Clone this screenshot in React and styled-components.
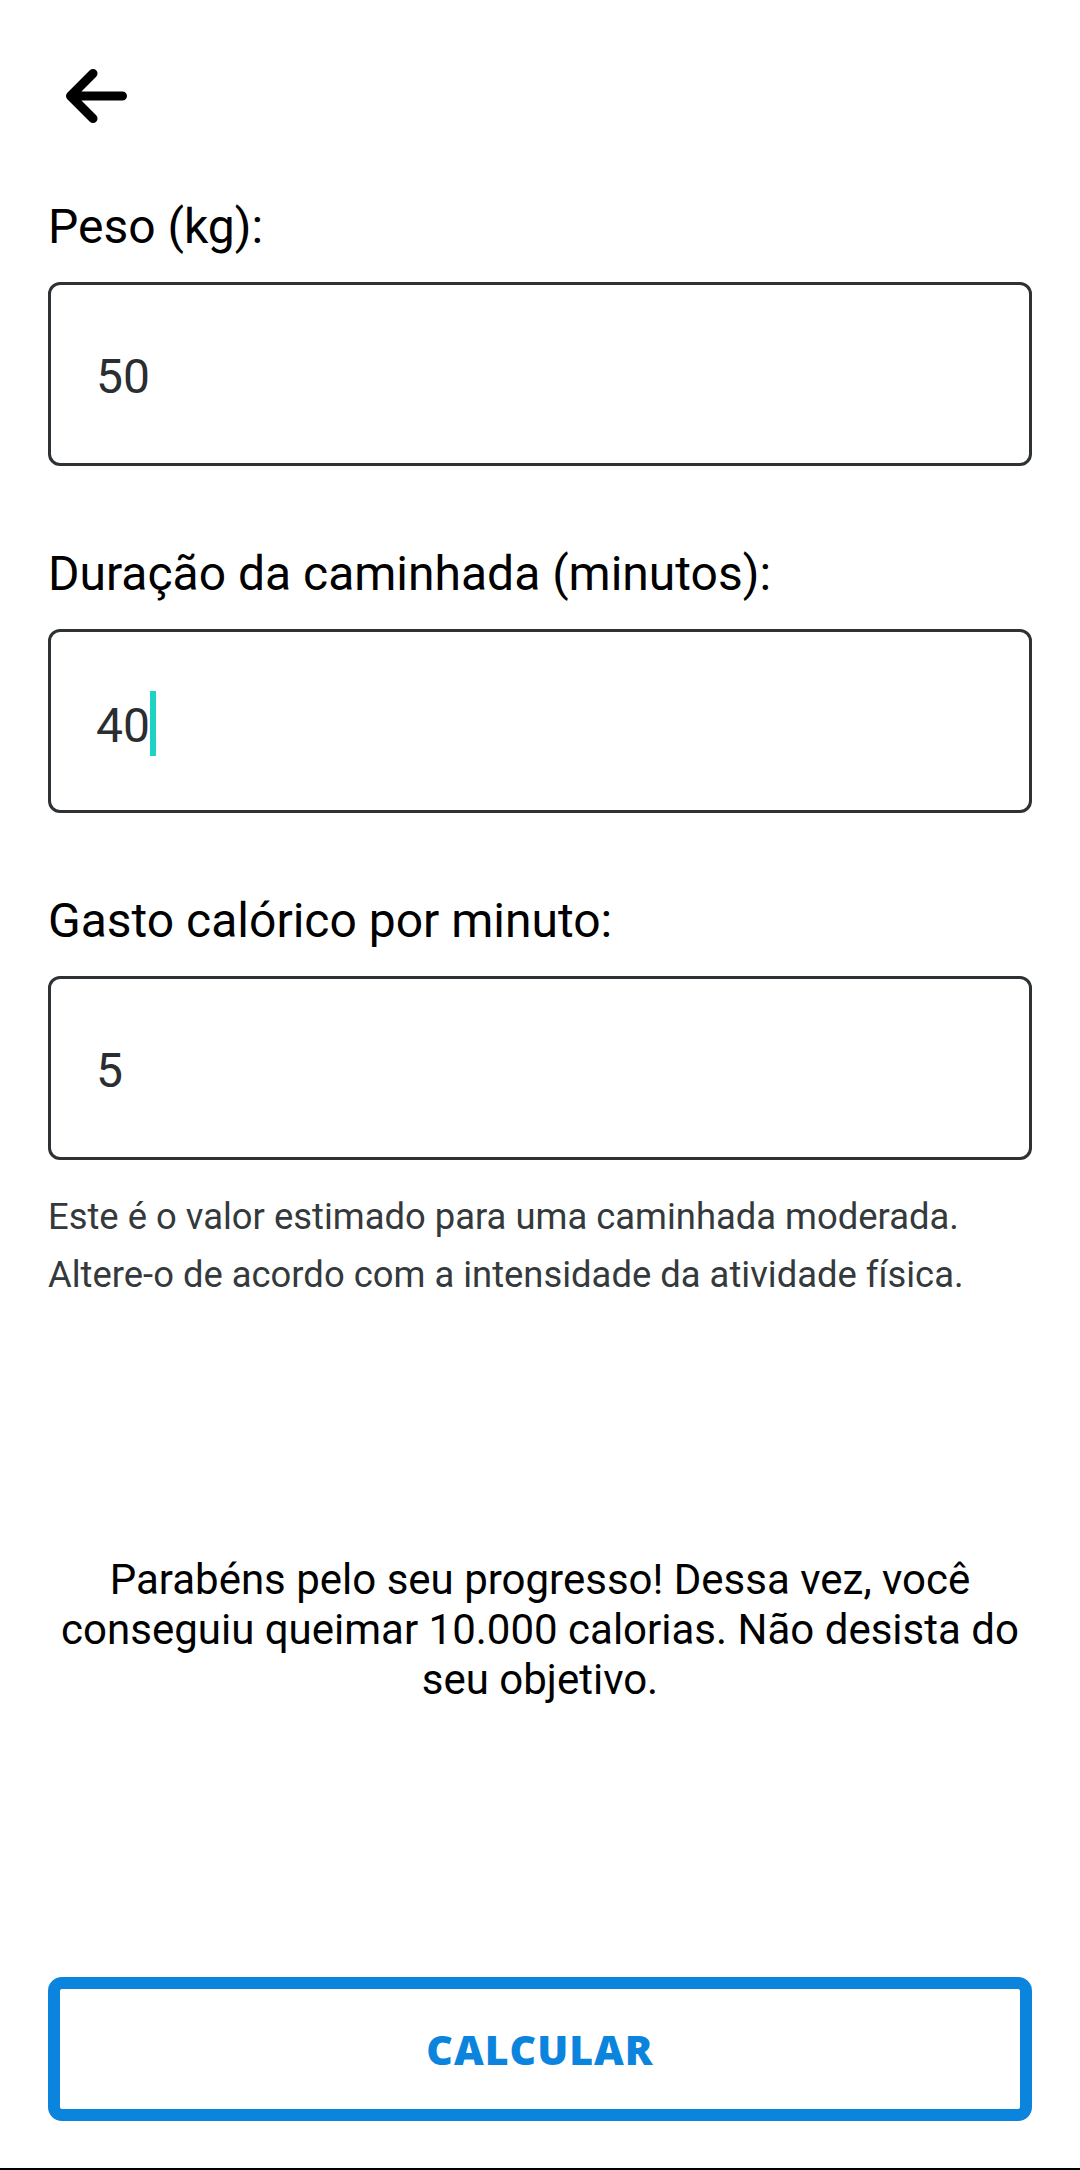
import React from "react";
import styled, { createGlobalStyle } from "styled-components";

const GlobalStyle = createGlobalStyle`
  html, body {
    margin: 0;
    padding: 0;
    background: #ffffff;
  }
  body {
    font-family: Roboto, "Noto Sans", "Liberation Sans", sans-serif;
    -webkit-font-smoothing: antialiased;
  }
  * { box-sizing: border-box; }
`;

const Page = styled.div`
  width: 1080px;
  min-height: 2170px;
  display: flex;
  flex-direction: column;
  background: #ffffff;
`;

const Content = styled.main`
  display: flex;
  flex-direction: column;
  padding: 0 48px;
`;

const Header = styled.header`
  display: flex;
  align-items: center;
  padding-top: 60px;
  height: 132px;
`;

const BackButton = styled.button`
  width: 72px;
  height: 72px;
  margin-left: 12px;
  padding: 0;
  border: none;
  background: transparent;
  display: flex;
  cursor: pointer;
`;

const Form = styled.section`
  display: flex;
  flex-direction: column;
  gap: 80px;
  margin-top: 67px;
`;

const Field = styled.div`
  display: flex;
  flex-direction: column;
`;

const Label = styled.label`
  font-size: 48px;
  line-height: 56px;
  color: #000000;
  margin-bottom: 27px;
`;

const InputBox = styled.div`
  height: 184px;
  border: 3px solid #2e3234;
  border-radius: 12px;
  display: flex;
  align-items: center;
  padding: 5px 0 0 45px;
  font-size: 48px;
  line-height: 56px;
  color: #2a2e31;
`;

const Caret = styled.span`
  display: inline-block;
  width: 6px;
  height: 65px;
  margin-left: 0;
  background: #1fd3c4;
  vertical-align: -14px;
`;

const Help = styled.p`
  margin: 28px 0 0;
  font-size: 36.4px;
  line-height: 58px;
  color: #34393c;
`;

const Message = styled.p`
  margin: 251px 0 0;
  padding: 0 10px;
  text-align: center;
  font-size: 42px;
  line-height: 50px;
  color: #000000;
`;

const CalcButton = styled.button`
  margin-top: 272px;
  height: 144px;
  width: 100%;
  border: 12px solid #0b84de;
  border-radius: 14px;
  background: #ffffff;
  color: #0b84de;
  font-family: "Open Sans", "Noto Sans", sans-serif;
  font-weight: 800;
  font-size: 41px;
  letter-spacing: 1px;
  display: flex;
  align-items: center;
  justify-content: center;
  cursor: pointer;
`;

const Footer = styled.div`
  margin-top: auto;
  height: 2px;
  background: #000000;
`;

function BackArrow() {
  return (
    <svg width="72" height="72" viewBox="0 0 72 72" aria-hidden="true">
      <path
        d="M62.5 36H11M33 13.5L10.5 36L33 58.5"
        fill="none"
        stroke="#000"
        strokeWidth="9"
        strokeLinecap="round"
        strokeLinejoin="round"
      />
    </svg>
  );
}

export default function App() {
  return (
    <>
      <GlobalStyle />
      <Page>
        <Content>
          <Header>
            <BackButton aria-label="Voltar">
              <BackArrow />
            </BackButton>
          </Header>
          <Form>
            <Field>
              <Label>Peso (kg):</Label>
              <InputBox role="textbox">50</InputBox>
            </Field>
            <Field>
              <Label>Duração da caminhada (minutos):</Label>
              <InputBox role="textbox">
                <span>
                  40
                  <Caret />
                </span>
              </InputBox>
            </Field>
            <Field>
              <Label>Gasto calórico por minuto:</Label>
              <InputBox role="textbox">5</InputBox>
            </Field>
          </Form>
          <Help>
            Este é o valor estimado para uma caminhada moderada.
            <br />
            Altere-o de acordo com a intensidade da atividade física.
          </Help>
          <Message>
            Parabéns pelo seu progresso! Dessa vez, você conseguiu queimar
            10.000 calorias. Não desista do seu objetivo.
          </Message>
          <CalcButton>CALCULAR</CalcButton>
        </Content>
        <Footer />
      </Page>
    </>
  );
}
